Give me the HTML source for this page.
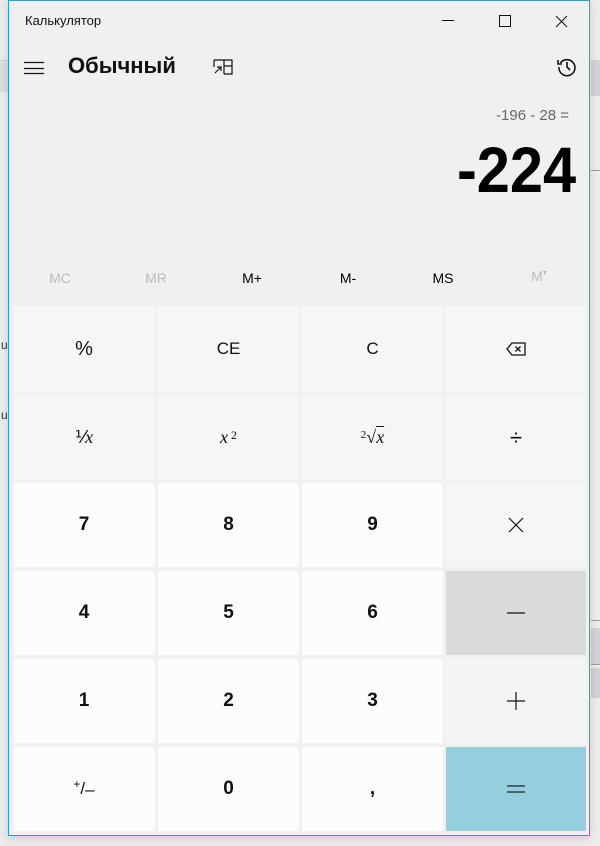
<!DOCTYPE html>
<html><head><meta charset="utf-8"><style>
body{margin:0;width:600px;height:846px;background:#ececec;position:relative;overflow:hidden;font-family:"Segoe UI","Liberation Sans","DejaVu Sans",sans-serif;}
.win{position:absolute;left:8px;top:0;width:582px;height:836px;border:1px solid #2aa3c2;background:#f0f0f1;box-sizing:border-box;box-shadow:0 2px 8px rgba(0,0,0,.15)}
.a{position:absolute}
.c{position:absolute;display:flex;align-items:center;justify-content:center;color:#111;font-size:17px}
.g{background:#f6f6f6}.w{background:#fcfcfc}
.m{position:absolute;top:270px;font-size:14px;width:60px;text-align:center}
</style></head><body>
<div class="a" style="left:0;top:60px;width:8px;height:1px;background:#ccc"></div>
<div class="a" style="left:0;top:62px;width:8px;height:30px;background:#dcdcdc"></div>
<div class="a" style="left:591px;top:60px;width:9px;height:36px;background:#d2d2d6"></div>
<div class="a" style="left:591px;top:170px;width:9px;height:1px;background:#999"></div>
<div class="a" style="left:591px;top:620px;width:9px;height:1px;background:#999"></div>
<div class="a" style="left:591px;top:628px;width:9px;height:36px;background:#d2d2d6"></div>
<div class="a" style="left:591px;top:664px;width:9px;height:1px;background:#999"></div>
<div class="a" style="left:591px;top:668px;width:9px;height:30px;background:#d2d2d6"></div>
<div class="a" style="left:1px;top:338px;font-size:12px;color:#333">u</div>
<div class="a" style="left:1px;top:408px;font-size:12px;color:#333">u</div>
<div class="win"></div>
<div class="a" style="left:25px;top:13px;font-size:13px;color:#111">Калькулятор</div>
<svg class="a" style="left:440px;top:12px" width="140" height="20" viewBox="0 0 140 20"><path d="M2 8.5h12" stroke="#111" stroke-width="1"/><rect x="59.5" y="3.5" width="11" height="11" fill="none" stroke="#111"/><path d="M116 4l11 11M127 4l-11 11" stroke="#111"/></svg>
<svg class="a" style="left:24px;top:61px" width="20" height="14"><path d="M0 1.5h20M0 7.5h20M0 12.5h20" stroke="#111" stroke-width="1.2"/></svg>
<div class="a" style="left:68px;top:53px;font-size:22px;font-weight:bold;color:#111">Обычный</div>
<svg class="a" style="left:213px;top:59px" width="20" height="18" viewBox="0 0 20 18"><path d="M1 1h18v14h-8M1 1v7M11 1v14M11 7h8" fill="none" stroke="#111" stroke-width="1.2"/><path d="M2 14l6-6M4 8h4v4" fill="none" stroke="#111" stroke-width="1.2"/></svg>
<svg class="a" style="left:556px;top:56px" width="22" height="22" viewBox="0 0 22 22"><path d="M4.5 7A8 8 0 1 1 3 11" fill="none" stroke="#111" stroke-width="1.6"/><path d="M2 4v4h4" fill="none" stroke="#111" stroke-width="1.6"/><path d="M11 6v5l3 3" fill="none" stroke="#111" stroke-width="1.6"/></svg>
<div class="a" style="right:31px;top:107px;font-size:15px;color:#666">-196 - 28 =</div>
<div class="a" style="right:24px;top:133px;font-size:64px;font-weight:bold;color:#000;transform:scaleX(0.93);transform-origin:right center">-224</div>
<div class="m" style="left:30px;color:#bbb">MC</div>
<div class="m" style="left:126px;color:#bbb">MR</div>
<div class="m" style="left:222px;color:#000">M+</div>
<div class="m" style="left:318px;color:#000">M-</div>
<div class="m" style="left:413px;color:#000">MS</div>
<div class="m" style="left:509px;color:#bbb;top:268px">M<span style="font-size:8px;vertical-align:top">▾</span></div>
<div class="c g" style="left:13px;top:306px;width:142px;height:86px;font-size:20px">%</div>
<div class="c g" style="left:158px;top:306px;width:141px;height:86px">CE</div>
<div class="c g" style="left:302px;top:306px;width:141px;height:86px">C</div>
<div class="c g" style="left:446px;top:306px;width:140px;height:86px"><svg width="20" height="14" viewBox="0 0 20 14"><path d="M6 1h13v12H6L1 7z" fill="none" stroke="#111" stroke-width="1.3"/><path d="M9.5 4.5l5 5M14.5 4.5l-5 5" stroke="#111" stroke-width="1.3"/></svg></div>
<div class="c g" style="left:13px;top:395px;width:142px;height:85px;font-family:'Liberation Serif',serif;font-size:18px"><span style="font-family:'Liberation Sans'">⅟</span><i>x</i></div>
<div class="c g" style="left:158px;top:395px;width:141px;height:85px;font-family:'Liberation Serif',serif;font-size:18px"><i>x</i><sup style="font-size:12px;margin-left:3px;position:relative;top:-2px">2</sup></div>
<div class="c g" style="left:302px;top:395px;width:141px;height:85px;font-family:'Liberation Serif',serif;font-size:18px"><sup style="font-size:11px;position:relative;top:-3px">2</sup>√<i style="text-decoration:overline">x</i></div>
<div class="c g" style="left:446px;top:395px;width:140px;height:85px;font-size:22px">÷</div>
<div class="c w" style="left:13px;top:483px;width:142px;height:84px;font-weight:bold;font-size:19px">7</div>
<div class="c w" style="left:158px;top:483px;width:141px;height:84px;font-weight:bold;font-size:19px">8</div>
<div class="c w" style="left:302px;top:483px;width:141px;height:84px;font-weight:bold;font-size:19px">9</div>
<div class="c g" style="left:446px;top:483px;width:140px;height:84px"><svg width="16" height="16"><path d="M1 1l14 14M15 1L1 15" stroke="#111" stroke-width="1.2"/></svg></div>
<div class="c w" style="left:13px;top:571px;width:142px;height:84px;font-weight:bold;font-size:19px">4</div>
<div class="c w" style="left:158px;top:571px;width:141px;height:84px;font-weight:bold;font-size:19px">5</div>
<div class="c w" style="left:302px;top:571px;width:141px;height:84px;font-weight:bold;font-size:19px">6</div>
<div class="c" style="left:446px;top:571px;width:140px;height:84px;background:#dadadc"><svg width="18" height="4"><path d="M0 2h18" stroke="#111" stroke-width="1.2"/></svg></div>
<div class="c w" style="left:13px;top:659px;width:142px;height:84px;font-weight:bold;font-size:19px">1</div>
<div class="c w" style="left:158px;top:659px;width:141px;height:84px;font-weight:bold;font-size:19px">2</div>
<div class="c w" style="left:302px;top:659px;width:141px;height:84px;font-weight:bold;font-size:19px">3</div>
<div class="c" style="left:446px;top:659px;width:140px;height:84px;background:#f4f4f6"><svg width="18" height="18"><path d="M0 9h18M9 0v18" stroke="#111" stroke-width="1.2"/></svg></div>
<div class="c w" style="left:13px;top:747px;width:142px;height:84px;font-size:17px"><span style="font-size:12px;position:relative;top:-5px">+</span>/<span style="position:relative;top:1px">–</span></div>
<div class="c w" style="left:158px;top:747px;width:141px;height:84px;font-weight:bold;font-size:19px">0</div>
<div class="c w" style="left:302px;top:747px;width:141px;height:84px;font-weight:bold;font-size:19px">,</div>
<div class="c" style="left:446px;top:747px;width:140px;height:84px;background:#93cfdd"><svg width="18" height="10"><path d="M0 2h18M0 8h18" stroke="#222" stroke-width="1.3"/></svg></div>
</body></html>
